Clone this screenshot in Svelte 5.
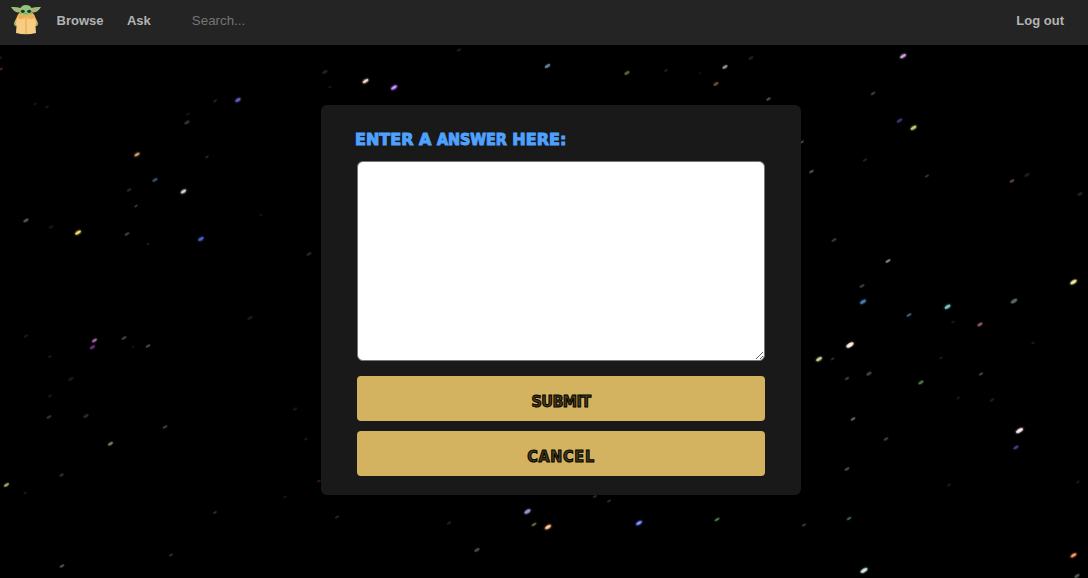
<script>
  let answer = $state('');
  let query = $state('');

  // x, y, colour, brightness, half length of each streak
  const stars = [
    [1, 69, '#a33c28', 0.6, 2], [0, 58, '#555', 0.4, 2], [238, 100, '#7777ee', 0.85, 3],
    [215, 101, '#777', 0.3, 2.3], [187, 122.5, '#999', 0.35, 3], [188, 114, '#777', 0.2, 2],
    [137, 154.5, '#ffc080', 0.85, 2.8], [207, 157, '#888', 0.3, 2], [155, 180, '#5d80c5', 0.6, 3],
    [129, 190, '#888', 0.3, 2.5], [183.5, 191.5, '#ffffff', 0.85, 3], [136, 206, '#9caaa0', 0.35, 2],
    [26, 220.5, '#b0aaa0', 0.5, 3], [51, 227, '#777', 0.2, 2.5], [78, 232.5, '#ffdd58', 0.95, 3.2],
    [127, 234, '#a0a0a0', 0.4, 2.7], [148, 244, '#aaa', 0.3, 1.5], [201, 239, '#5578ff', 0.85, 3],
    [309, 254, '#888', 0.3, 2.8], [261, 215, '#888', 0.25, 1.5], [47, 107, '#777', 0.25, 2], [35, 104, '#777', 0.2, 2],
    [94.5, 340.5, '#df83e8', 0.75, 3], [92.5, 347.3, '#a442cb', 0.7, 3], [124, 338, '#70917c', 0.5, 2.8],
    [133, 347, '#8b263a', 0.4, 1.5], [148, 346, '#95a096', 0.45, 2.6], [50, 356.5, '#777', 0.25, 2],
    [71, 379, '#777', 0.22, 3], [50, 396, '#777', 0.25, 2], [49, 417, '#80817b', 0.4, 2.8],
    [86, 416, '#78808a', 0.35, 3], [165, 427, '#8ca096', 0.4, 2.7], [110.5, 443.8, '#d1cda5', 0.6, 3],
    [61.5, 475, '#858979', 0.35, 2.5], [6.5, 485, '#eee98c', 0.7, 3], [25, 493, '#888', 0.3, 1.7],
    [215, 512.5, '#89928a', 0.35, 2.2], [171, 555, '#89928a', 0.35, 2.2], [62, 566, '#a7b2a2', 0.45, 2.6],
    [295, 409, '#777', 0.2, 2.5], [306, 439, '#777', 0.25, 2], [250, 318, '#777', 0.22, 3], [319, 481, '#7b2641', 0.55, 2],
    [26, 336, '#777', 0.2, 2.5], [285, 497, '#777', 0.2, 2],
    [325, 72, '#777', 0.3, 3], [330, 87, '#777', 0.2, 2], [365.5, 81, '#ffdcd0', 0.95, 3.2],
    [394, 87.5, '#b070ff', 1, 3.4], [459, 50, '#765078', 0.3, 2.5], [547.5, 66, '#87b2cf', 0.75, 3.1],
    [627, 73, '#9ba346', 0.65, 3], [666, 70.5, '#888', 0.25, 2.3], [725, 67, '#c7ccc0', 0.75, 3],
    [716, 84, '#c77d5b', 0.6, 3], [751, 58, '#777', 0.3, 2.7], [768.5, 99, '#aaa', 0.45, 2.6], [700, 73, '#777', 0.2, 1.7],
    [903, 56, '#e5b2f5', 0.9, 3.3], [873, 93.5, '#a0958b', 0.4, 2.7], [899.5, 120.5, '#5e5cbf', 0.6, 3.2],
    [913.5, 127.7, '#ccee83', 0.9, 3.2], [802, 142, '#999', 0.5, 2.2], [811.5, 171.5, '#999', 0.5, 2.7],
    [865, 160, '#777', 0.25, 2.5], [927, 176, '#8b8e84', 0.4, 2.3], [1012, 181, '#a96c8b', 0.6, 2.7],
    [1027, 175, '#777', 0.25, 3], [1080, 194, '#876576', 0.3, 3], [834, 240, '#8e918c', 0.4, 2.8],
    [888, 261, '#d4ceb6', 0.65, 2.8], [1073.5, 282, '#fff5a0', 0.95, 3.5], [862, 286, '#8d8c75', 0.45, 2.8],
    [863, 301.7, '#4d9de2', 0.85, 3.2], [1014, 301, '#92b9a4', 0.6, 3.7], [909, 315, '#508db0', 0.7, 2.8],
    [947.5, 306.7, '#8ce1e6', 0.9, 3.2], [980, 324.5, '#c9797e', 0.75, 3], [850, 345, '#ffe9df', 1, 4],
    [819, 359, '#e9edaa', 0.9, 3.2], [832.5, 359, '#888', 0.35, 2], [869, 373.7, '#7a9a79', 0.5, 3],
    [847, 378.5, '#89938a', 0.4, 2.5], [921, 382.5, '#65bc5d', 0.7, 3], [981, 374, '#57935f', 0.55, 2.4],
    [941, 358, '#777', 0.25, 2], [1033, 343, '#777', 0.25, 2], [958, 398, '#777', 0.25, 2],
    [992, 400, '#777', 0.25, 2.5], [953, 322, '#777', 0.25, 2], [853, 419, '#b5b5aa', 0.55, 2.7],
    [886, 439, '#828f87', 0.45, 2.7], [1019.5, 430.5, '#ffe8f1', 1, 3.9], [1016, 447.5, '#7651c6', 0.7, 3],
    [847, 469, '#9a9c92', 0.5, 2.7], [949, 485, '#3a367b', 0.4, 2.4], [849, 518.5, '#589572', 0.65, 2.7],
    [804, 525, '#6b8d7b', 0.5, 2.3], [1073.5, 555.2, '#ff8355', 0.95, 3.3], [864, 570.4, '#d6f2f5', 0.95, 3.8],
    [1077, 576, '#9cb4a0', 0.5, 3], [1078, 482, '#777', 0.25, 2],
    [337, 517, '#888', 0.3, 2.3], [449, 523, '#777', 0.25, 2.5], [477, 550, '#aaa99a', 0.45, 3],
    [527.5, 511.5, '#abb5ff', 0.85, 3.4], [534, 524.5, '#829f43', 0.7, 2.8], [548, 527, '#ffb57a', 1, 3.4],
    [595, 496.5, '#676093', 0.4, 2.4], [609, 501, '#888', 0.35, 2.3], [639, 523, '#617bff', 0.95, 3.4], [717, 519.5, '#69ae72', 0.7, 2.8]
  ];
</script>

<div class="page">
  <svg class="sky" viewBox="0 0 1088 578" aria-hidden="true">
    <defs>
      <filter id="soft" x="-50%" y="-100%" width="200%" height="300%"><feGaussianBlur stdDeviation="0.55" /></filter>
      <filter id="halo" x="-100%" y="-150%" width="300%" height="400%"><feGaussianBlur stdDeviation="1.2" /></filter>
    </defs>
    {#each stars as [x, y, color, glow, r]}
      <g transform={`translate(${x} ${y}) rotate(-32)`} opacity={glow}>
        {#if glow > 0.8}
          <ellipse rx={r + 0.6} ry="1.8" fill={color} opacity=".4" filter="url(#halo)" />
        {/if}
        <ellipse rx={r} ry={r * 0.48} fill={color} filter="url(#soft)" />
        {#if glow > 0.9}<ellipse rx={r * 0.6} ry=".7" fill="#fff" opacity=".5" />{/if}
      </g>
    {/each}
  </svg>

  <nav>
    <svg class="logo" viewBox="0 0 30 30" aria-hidden="true">
      <path d="M7 9.500 3.500 17q-1 3 1 4h3zM23 9.500l3.500 7.500q1 3-1 4h-3z" fill="#edb056" />
      <path d="M3.500 17.500 5 21M26.500 17.500 25 21" stroke="#89b969" stroke-width="1.600" />
      <path d="M7.500 9h15l2.500 9-.5 3 .5 7q-10 2.500-20 0l.5-7-.5-3z" fill="#f5cd83" />
      <path d="M8 8q7 2 14 0l2 4-3 2.500-6-1.500-6 1.500L6 12z" fill="#edb056" />
      <path d="M14 12h2v17h-2z" fill="#eeb962" />
      <path d="M0 2q5-.5 9.500 1Q11 0 15 0t5.500 3Q25 1.500 30 2q-3 5.500-8.500 5.500Q20 10 15 10T8.500 7.500Q3 7.500 0 2z" fill="#91c57c" />
      <path d="m2 3 7 1v2.300Q5 6 2 3zM28 3l-7 1v2.300Q25 6 28 3z" fill="#c9a475" />
      <ellipse cx="11.800" cy="6.300" rx="2" ry="1.600" fill="#22351f" />
      <ellipse cx="18.200" cy="6.300" rx="2" ry="1.600" fill="#22351f" />
      <path d="M13.500 8.500h3" stroke="#668653" stroke-width=".6" />
    </svg>
    <a class="browse" href="#browse">Browse</a>
    <a class="ask" href="#ask">Ask</a>
    <input type="text" placeholder="Search..." bind:value={query} />
    <a class="logout" href="#logout">Log out</a>
  </nav>

  <form onsubmit={(e) => e.preventDefault()}>
    <label for="answer">Enter a <span>Answer</span> Here:</label>
    <textarea id="answer" bind:value={answer}></textarea>
    <button class="submit" type="submit">Submit</button>
    <button class="cancel" type="button">Cancel</button>
  </form>
</div>

<style>
  :global(body) { margin: 0; background: #000; }
  .page {
    position: relative;
    height: 578px;
    overflow: hidden;
    background: #000;
    font-family: "Liberation Sans", Arial, sans-serif;
  }
  .sky { position: absolute; inset: 0; width: 1088px; height: 578px; }
  nav {
    position: relative;
    display: flex;
    align-items: flex-start;
    box-sizing: border-box;
    height: 45px;
    padding: 0 24px 0 11px;
    background: #242424;
  }
  .logo { width: 30px; height: 30px; margin-top: 5px; }
  nav a {
    margin-top: 13px;
    color: #b3b3b3;
    font-size: 13px;
    font-weight: bold;
    line-height: 16px;
    text-decoration: none;
  }
  .browse { margin-left: 15.5px; }
  .ask { margin-left: 23.5px; }
  input {
    width: 150px;
    height: 20px;
    margin: 10px 0 0 41px;
    padding: 0;
    border: 0;
    outline: 0;
    background: transparent;
    color: #b3b3b3;
    font: 13.333px "Liberation Sans", Arial, sans-serif;
  }
  input::placeholder { color: #757575; }
  nav .logout { margin-left: auto; }
  form {
    position: relative;
    display: flex;
    flex-direction: column;
    box-sizing: border-box;
    width: 480px;
    height: 390px;
    margin: 60px 0 0 321px;
    padding: 25px 36px 0;
    border-radius: 6px;
    background: #191919;
  }
  label {
    flex: none;
    height: 31px;
    margin-left: -2px;
    color: #4ea2ff;
    font: bold 16px/20px "DejaVu Sans", sans-serif;
    text-transform: uppercase;
    white-space: nowrap;
    -webkit-text-stroke: 1px #4ea2ff;
  }
  label span {
    font-family: "DejaVu Sans Condensed", "DejaVu Sans", sans-serif;
    font-stretch: condensed;
    letter-spacing: -0.1px;
  }
  textarea {
    flex: none;
    box-sizing: border-box;
    width: 408px;
    height: 200px;
    margin: 0 0 15px;
    border: 1px solid #767676;
    border-radius: 6px;
    background: #fff;
    outline: 0;
    resize: both;
  }
  button {
    flex: none;
    height: 45px;
    margin: 0 0 10px;
    padding: 7px 0 0;
    border: 0;
    border-radius: 4px;
    background: #d3b35f;
    color: #4a3c1c;
    font: bold 16px/20px "DejaVu Sans Condensed", "DejaVu Sans", sans-serif;
    font-stretch: condensed;
    text-transform: uppercase;
    -webkit-text-stroke: 1px #000;
  }
  .submit { letter-spacing: -0.6px; }
  .cancel { letter-spacing: 0.7px; }
</style>
